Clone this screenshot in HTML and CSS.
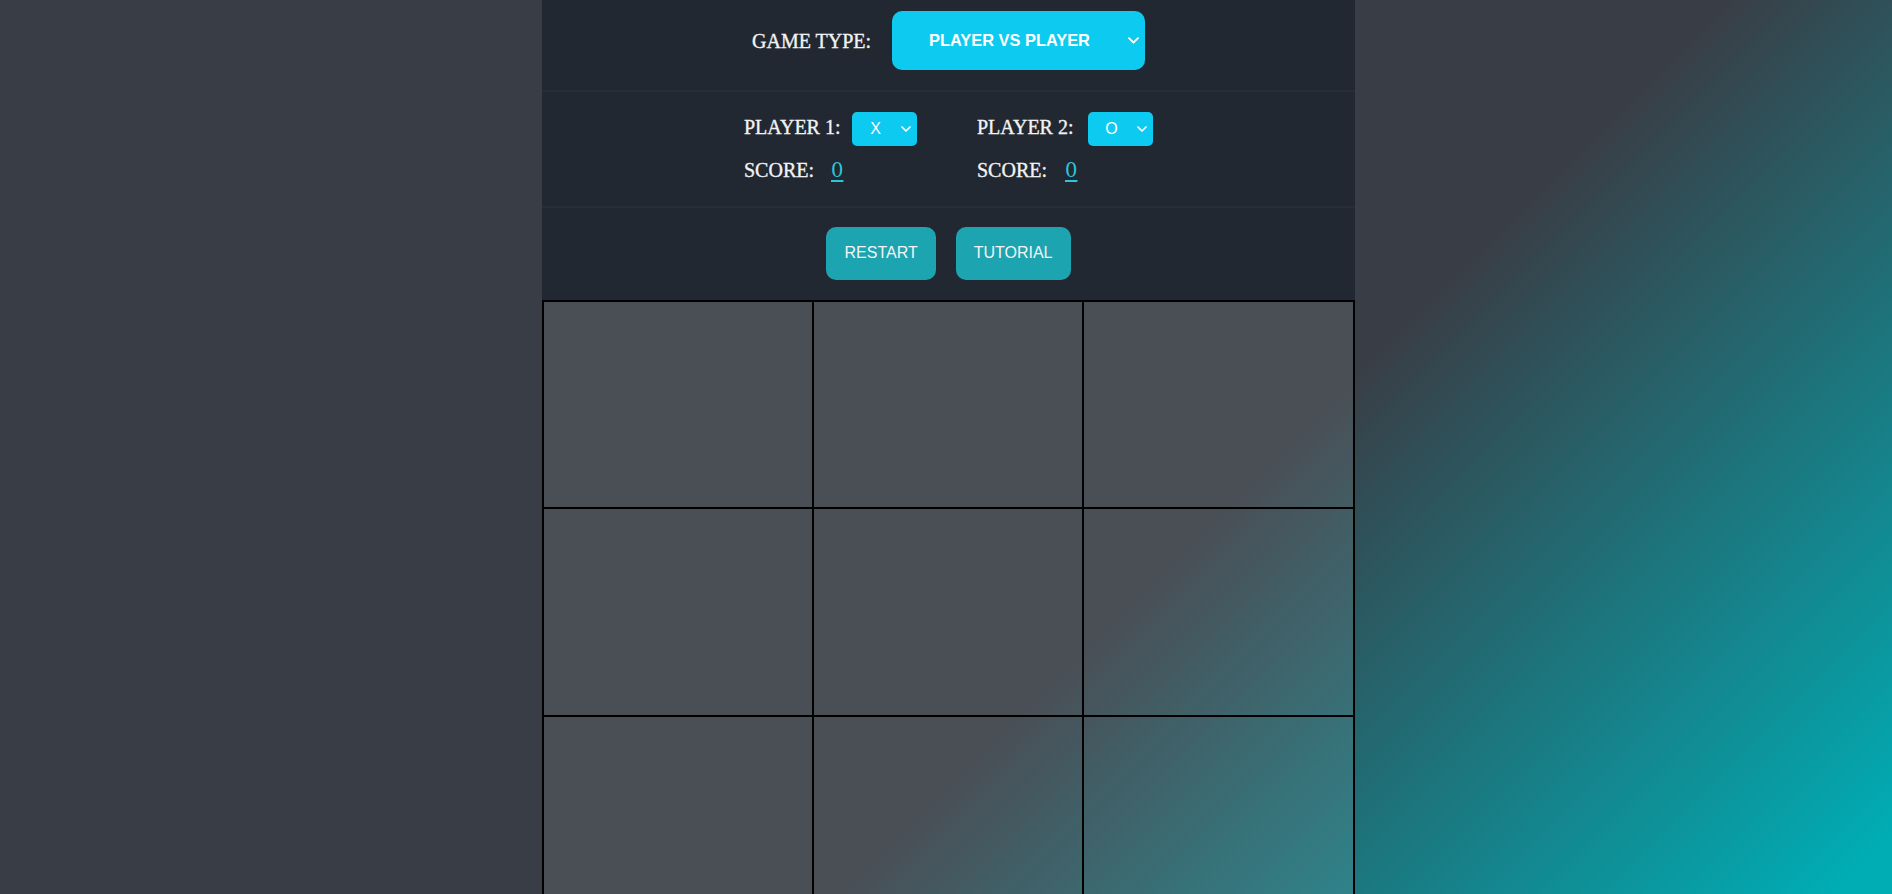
FILE: index.html
```html
<!DOCTYPE html>
<html lang="en">
<head>
<meta charset="utf-8">
<title>Tic Tac Toe</title>
<link rel="stylesheet" href="styles.css">
</head>
<body>
<div class="page">
  <main class="game">
    <header class="panel">
      <section class="type-row">
        <span class="label label-type">GAME TYPE:</span>
        <div class="select select-lg">
          <span class="select-text">PLAYER VS PLAYER</span>
          <svg class="chev" width="11" height="7" viewBox="0 0 11 7"><path d="M1 1.2 L5.5 5.5 L10 1.2" fill="none" stroke="#fff" stroke-width="1.8" stroke-linecap="round" stroke-linejoin="round"/></svg>
        </div>
      </section>
      <section class="players">
        <div class="player">
          <div class="player-line">
            <span class="label label-p1">PLAYER 1:</span>
            <div class="select select-sm">
              <span class="select-text">X</span>
              <svg class="chev-sm" width="10" height="6" viewBox="0 0 10 6"><path d="M1 1 L5 5 L9 1" fill="none" stroke="#fff" stroke-width="1.7" stroke-linecap="round" stroke-linejoin="round"/></svg>
            </div>
          </div>
          <div class="score-line">
            <span class="label label-score">SCORE:</span>
            <a class="score" href="#">0</a>
          </div>
        </div>
        <div class="player">
          <div class="player-line">
            <span class="label label-p2">PLAYER 2:</span>
            <div class="select select-sm">
              <span class="select-text">O</span>
              <svg class="chev-sm" width="10" height="6" viewBox="0 0 10 6"><path d="M1 1 L5 5 L9 1" fill="none" stroke="#fff" stroke-width="1.7" stroke-linecap="round" stroke-linejoin="round"/></svg>
            </div>
          </div>
          <div class="score-line">
            <span class="label label-score2">SCORE:</span>
            <a class="score" href="#">0</a>
          </div>
        </div>
      </section>
      <section class="actions">
        <button class="btn" type="button">RESTART</button>
        <button class="btn" type="button">TUTORIAL</button>
      </section>
    </header>
    <div class="board">
      <div class="cell"></div>
      <div class="cell"></div>
      <div class="cell"></div>
      <div class="cell"></div>
      <div class="cell"></div>
      <div class="cell"></div>
      <div class="cell"></div>
      <div class="cell"></div>
      <div class="cell"></div>
    </div>
  </main>
</div>
</body>
</html>
```
FILE: styles.css
```css
html, body {
  margin: 0;
  padding: 0;
}

body {
  min-height: 100vh;
  background: linear-gradient(135deg, #393E46 62%, #00ADB5 98%) fixed;
  font-family: "Liberation Serif", "Times New Roman", serif;
  color: #eeeeee;
}

.page {
  display: flex;
  justify-content: center;
  padding-left: 5px;
}

.game {
  width: 813px;
}

.panel {
  background: #222831;
}

.label {
  font-size: 20px;
  line-height: 30px;
  color: #f2f2f2;
  white-space: nowrap;
  -webkit-text-stroke: 0.35px #f2f2f2;
}

/* game type row */
.type-row {
  display: flex;
  justify-content: center;
  align-items: center;
  height: 59px;
  padding: 11px 0 20px;
  border-bottom: 2px solid #272d38;
}

.label-type {
  width: 140px;
}

.select {
  display: flex;
  align-items: center;
  background: #0dcaf0;
  color: #ffffff;
  font-family: "Liberation Sans", Arial, sans-serif;
  font-size: 16px;
  box-sizing: border-box;
}

.select-lg {
  width: 253px;
  height: 59px;
  border-radius: 10px;
  padding: 0 6px 0 18px;
  font-weight: bold;
  font-size: 16.4px;
}

.select-lg .select-text {
  width: 199px;
  text-align: center;
}

.chev {
  margin-left: 19px;
  display: block;
}

.select-sm {
  width: 65px;
  height: 34px;
  border-radius: 5px;
  padding: 0 6px 0 0;
}

.select-sm .select-text {
  width: 47px;
  text-align: center;
}

.chev-sm {
  margin-left: 2px;
  display: block;
}

/* players */
.players {
  display: flex;
  justify-content: center;
  gap: 60px;
  padding: 20px 0 21px;
  border-bottom: 2px solid #272d38;
}

.player {
  display: flex;
  flex-direction: column;
  gap: 9px;
}

.player-line {
  display: flex;
  align-items: center;
  height: 34px;
}

.label-p1,
.label-p2 {
  padding-bottom: 4px;
}

.label-p1 {
  width: 108px;
}

.label-p2 {
  width: 111px;
}

.score-line {
  display: flex;
  align-items: baseline;
  height: 30px;
}

.label-score {
  width: 87px;
}

.label-score2 {
  width: 88px;
}

.score {
  font-family: "DejaVu Serif", "Liberation Serif", serif;
  font-size: 19.5px;
  line-height: 30px;
  color: #2ec4dc;
  text-decoration: underline;
  text-decoration-thickness: 2px;
  text-underline-offset: 3px;
}

/* actions */
.actions {
  display: flex;
  justify-content: center;
  gap: 20px;
  padding: 19px 0 20px;
}

.btn {
  height: 53px;
  padding: 0 18px 2px;
  border: none;
  border-radius: 10px;
  background: #1ca4b0;
  color: #f4f4f4;
  font-family: "Liberation Sans", Arial, sans-serif;
  font-size: 16px;
  cursor: pointer;
}

/* board */
.board {
  display: grid;
  grid-template-columns: 270px 270px 271px;
  grid-template-rows: 207px 208px 208px;
  border-top: 2px solid #000;
  border-left: 2px solid #000;
}

.cell {
  box-sizing: border-box;
  border-right: 2px solid #000;
  border-bottom: 2px solid #000;
  background: rgba(255, 255, 255, 0.087);
}
```
